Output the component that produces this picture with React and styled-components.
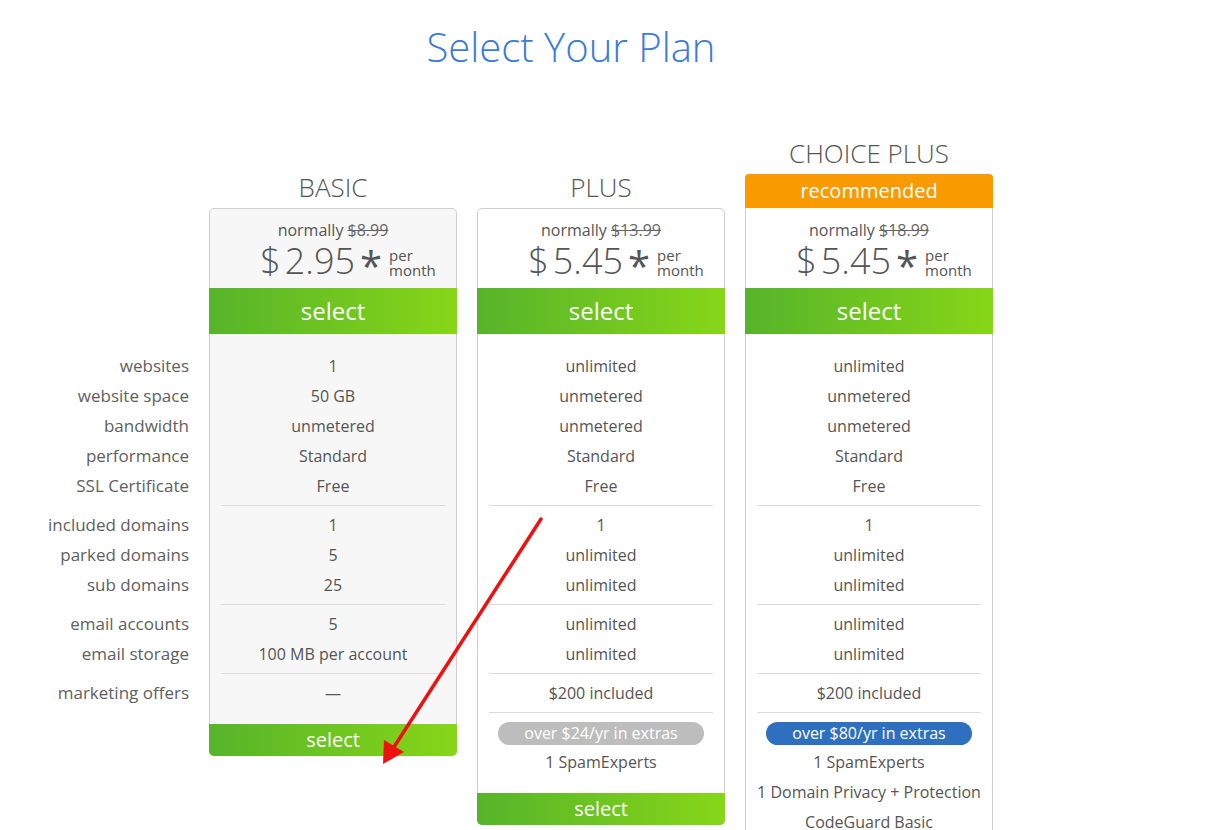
import React from "react";
import styled, { createGlobalStyle } from "styled-components";

const GlobalStyle = createGlobalStyle`
  html, body { margin: 0; padding: 0; background: #fff; }
  body {
    font-family: "Open Sans", "DejaVu Sans", sans-serif;
    color: #555;
  }
`;

const Page = styled.div`
  position: relative;
  width: 1216px;
  min-height: 830px;
`;

const Title = styled.h1`
  width: 1142px;
  margin: 19px 0 0;
  text-align: center;
  font-size: 40px;
  line-height: 56px;
  font-weight: 300;
  color: #3b7cd6;
`;

const Layout = styled.div`
  display: flex;
  align-items: flex-start;
  gap: 20px;
  margin-top: 60px;
`;

const LabelColumn = styled.div`
  width: 189px;
  padding-top: 212px;
  color: #606060;
`;

const PlanColumn = styled.div`
  width: 248px;
  display: flex;
  flex-direction: column;
  padding-top: ${(p) => (p.$featured ? "0" : "34px")};
`;

const PlanName = styled.div`
  text-align: center;
  font-size: 26px;
  line-height: 36px;
  font-weight: 300;
  color: #555;
  margin-bottom: 3px;
`;

const Badge = styled.div`
  height: 34px;
  line-height: 34px;
  background: #f99b00;
  color: #fff;
  text-align: center;
  font-size: 20px;
  border-radius: 4px 4px 0 0;
`;

const Card = styled.div`
  background: ${(p) => (p.$shaded ? "#f7f7f7" : "#fff")};
  border: 1px solid #cfcfcf;
  border-top: ${(p) => (p.$featured ? "none" : "1px solid #cfcfcf")};
  border-radius: ${(p) => (p.$featured ? "0 0 5px 5px" : "5px")};
  display: flex;
  flex-direction: column;
`;

const PriceHead = styled.div`
  padding: ${(p) => (p.$featured ? "11px" : "10px")} 0 7px;
  text-align: center;
`;

const Normally = styled.div`
  font-size: 16px;
  line-height: 22px;
  color: #555;
  s { color: #666; }
`;

const PriceRow = styled.div`
  display: flex;
  justify-content: center;
  align-items: flex-end;
  height: 40px;
  padding-left: 30px;
`;

const Dollar = styled.span`
  font-size: 36px;
  line-height: 40px;
  font-weight: 300;
  margin-right: 4px;
`;

const Amount = styled.span`
  font-size: 36px;
  line-height: 40px;
  font-weight: 300;
`;

const Star = styled.span`
  font-size: 40px;
  line-height: 40px;
  font-weight: 400;
  margin: 0 7px 0 5px;
  position: relative;
  top: 5px;
  align-self: flex-start;
`;

const PerMonth = styled.span`
  display: flex;
  flex-direction: column;
  text-align: left;
  font-size: 15px;
  line-height: 15px;
  margin-bottom: 3px;
`;

const SelectBar = styled.div`
  margin: 0 -1px ${(p) => (p.$bottom ? "-1px" : "0")};
  height: ${(p) => (p.$bottom ? "32px" : "46px")};
  line-height: ${(p) => (p.$bottom ? "32px" : "46px")};
  font-size: ${(p) => (p.$bottom ? "20px" : "24px")};
  background: linear-gradient(to right, #56b42a, #87d618);
  color: #fff;
  text-align: center;
  border-radius: ${(p) => (p.$bottom ? "0 0 5px 5px" : "0")};
  cursor: pointer;
`;

const Body = styled.div`
  padding: 13px 0 12px;
`;

const Section = styled.div`
  padding: 4px 0;
`;

const Divider = styled.div`
  height: 1px;
  margin: 0 11px;
  background: ${(p) => (p.$hidden ? "transparent" : "#dcdcdc")};
`;

const Row = styled.div`
  height: 30px;
  line-height: 30px;
  font-size: ${(p) => (p.$label ? "17px" : "16px")};
  text-align: ${(p) => (p.$label ? "right" : "center")};
  white-space: nowrap;
`;

const Pill = styled.span`
  display: inline-block;
  width: 206px;
  height: 23px;
  line-height: 23px;
  border-radius: 12px;
  background: ${(p) => (p.$blue ? "#2f6fc0" : "#bdbdbd")};
  color: #fff;
  font-size: 16px;
  vertical-align: middle;
`;

const Arrow = styled.svg`
  position: absolute;
  left: 0;
  top: 0;
  pointer-events: none;
`;

const labels = [
  ["websites", "website space", "bandwidth", "performance", "SSL Certificate"],
  ["included domains", "parked domains", "sub domains"],
  ["email accounts", "email storage"],
  ["marketing offers"],
];

const plans = [
  {
    name: "BASIC",
    normal: "$8.99",
    price: "2.95",
    shaded: true,
    sections: [
      ["1", "50 GB", "unmetered", "Standard", "Free"],
      ["1", "5", "25"],
      ["5", "100 MB per account"],
      ["\u2014"],
    ],
  },
  {
    name: "PLUS",
    normal: "$13.99",
    price: "5.45",
    sections: [
      ["unlimited", "unmetered", "unmetered", "Standard", "Free"],
      ["1", "unlimited", "unlimited"],
      ["unlimited", "unlimited"],
      ["$200 included"],
    ],
    extras: { label: "over $24/yr in extras", blue: false, items: ["1 SpamExperts"] },
  },
  {
    name: "CHOICE PLUS",
    normal: "$18.99",
    price: "5.45",
    featured: true,
    sections: [
      ["unlimited", "unmetered", "unmetered", "Standard", "Free"],
      ["1", "unlimited", "unlimited"],
      ["unlimited", "unlimited"],
      ["$200 included"],
    ],
    extras: {
      label: "over $80/yr in extras",
      blue: true,
      items: ["1 SpamExperts", "1 Domain Privacy + Protection", "CodeGuard Basic"],
    },
  },
];

function Plan({ plan }) {
  const { sections, extras } = plan;
  return (
    <PlanColumn $featured={plan.featured}>
      <PlanName>{plan.name}</PlanName>
      {plan.featured && <Badge>recommended</Badge>}
      <Card $shaded={plan.shaded} $featured={plan.featured}>
        <PriceHead $featured={plan.featured}>
          <Normally>
            normally <s>{plan.normal}</s>
          </Normally>
          <PriceRow>
            <Dollar>$</Dollar>
            <Amount>{plan.price}</Amount>
            <Star>*</Star>
            <PerMonth>
              <span>per</span>
              <span>month</span>
            </PerMonth>
          </PriceRow>
        </PriceHead>
        <SelectBar>select</SelectBar>
        <Body>
          {sections.map((sec, i) => (
            <React.Fragment key={i}>
              <Section>
                {sec.map((v, j) => (
                  <Row key={j}>{v}</Row>
                ))}
              </Section>
              {(i < sections.length - 1 || extras) && <Divider />}
            </React.Fragment>
          ))}
          {extras && (
            <Section>
              <Row>
                <Pill $blue={extras.blue}>{extras.label}</Pill>
              </Row>
              {extras.items.map((v) => (
                <Row key={v}>{v}</Row>
              ))}
            </Section>
          )}
        </Body>
        <SelectBar $bottom>select</SelectBar>
      </Card>
    </PlanColumn>
  );
}

export default function App() {
  return (
    <Page>
      <GlobalStyle />
      <Title>Select Your Plan</Title>
      <Layout>
        <LabelColumn>
          {labels.map((sec, i) => (
            <React.Fragment key={i}>
              <Section>
                {sec.map((l) => (
                  <Row key={l} $label>
                    {l}
                  </Row>
                ))}
              </Section>
              {i < labels.length - 1 && <Divider $hidden />}
            </React.Fragment>
          ))}
        </LabelColumn>
        {plans.map((p) => (
          <Plan key={p.name} plan={p} />
        ))}
      </Layout>
      <Arrow width="1216" height="830" viewBox="0 0 1216 830">
        <line x1="541" y1="500" x2="394" y2="728" stroke="#f01010" strokeWidth="3.5" strokeLinecap="round" />
        <polygon points="383,745 384,721 404,733" fill="#f01010" />
      </Arrow>
    </Page>
  );
}
